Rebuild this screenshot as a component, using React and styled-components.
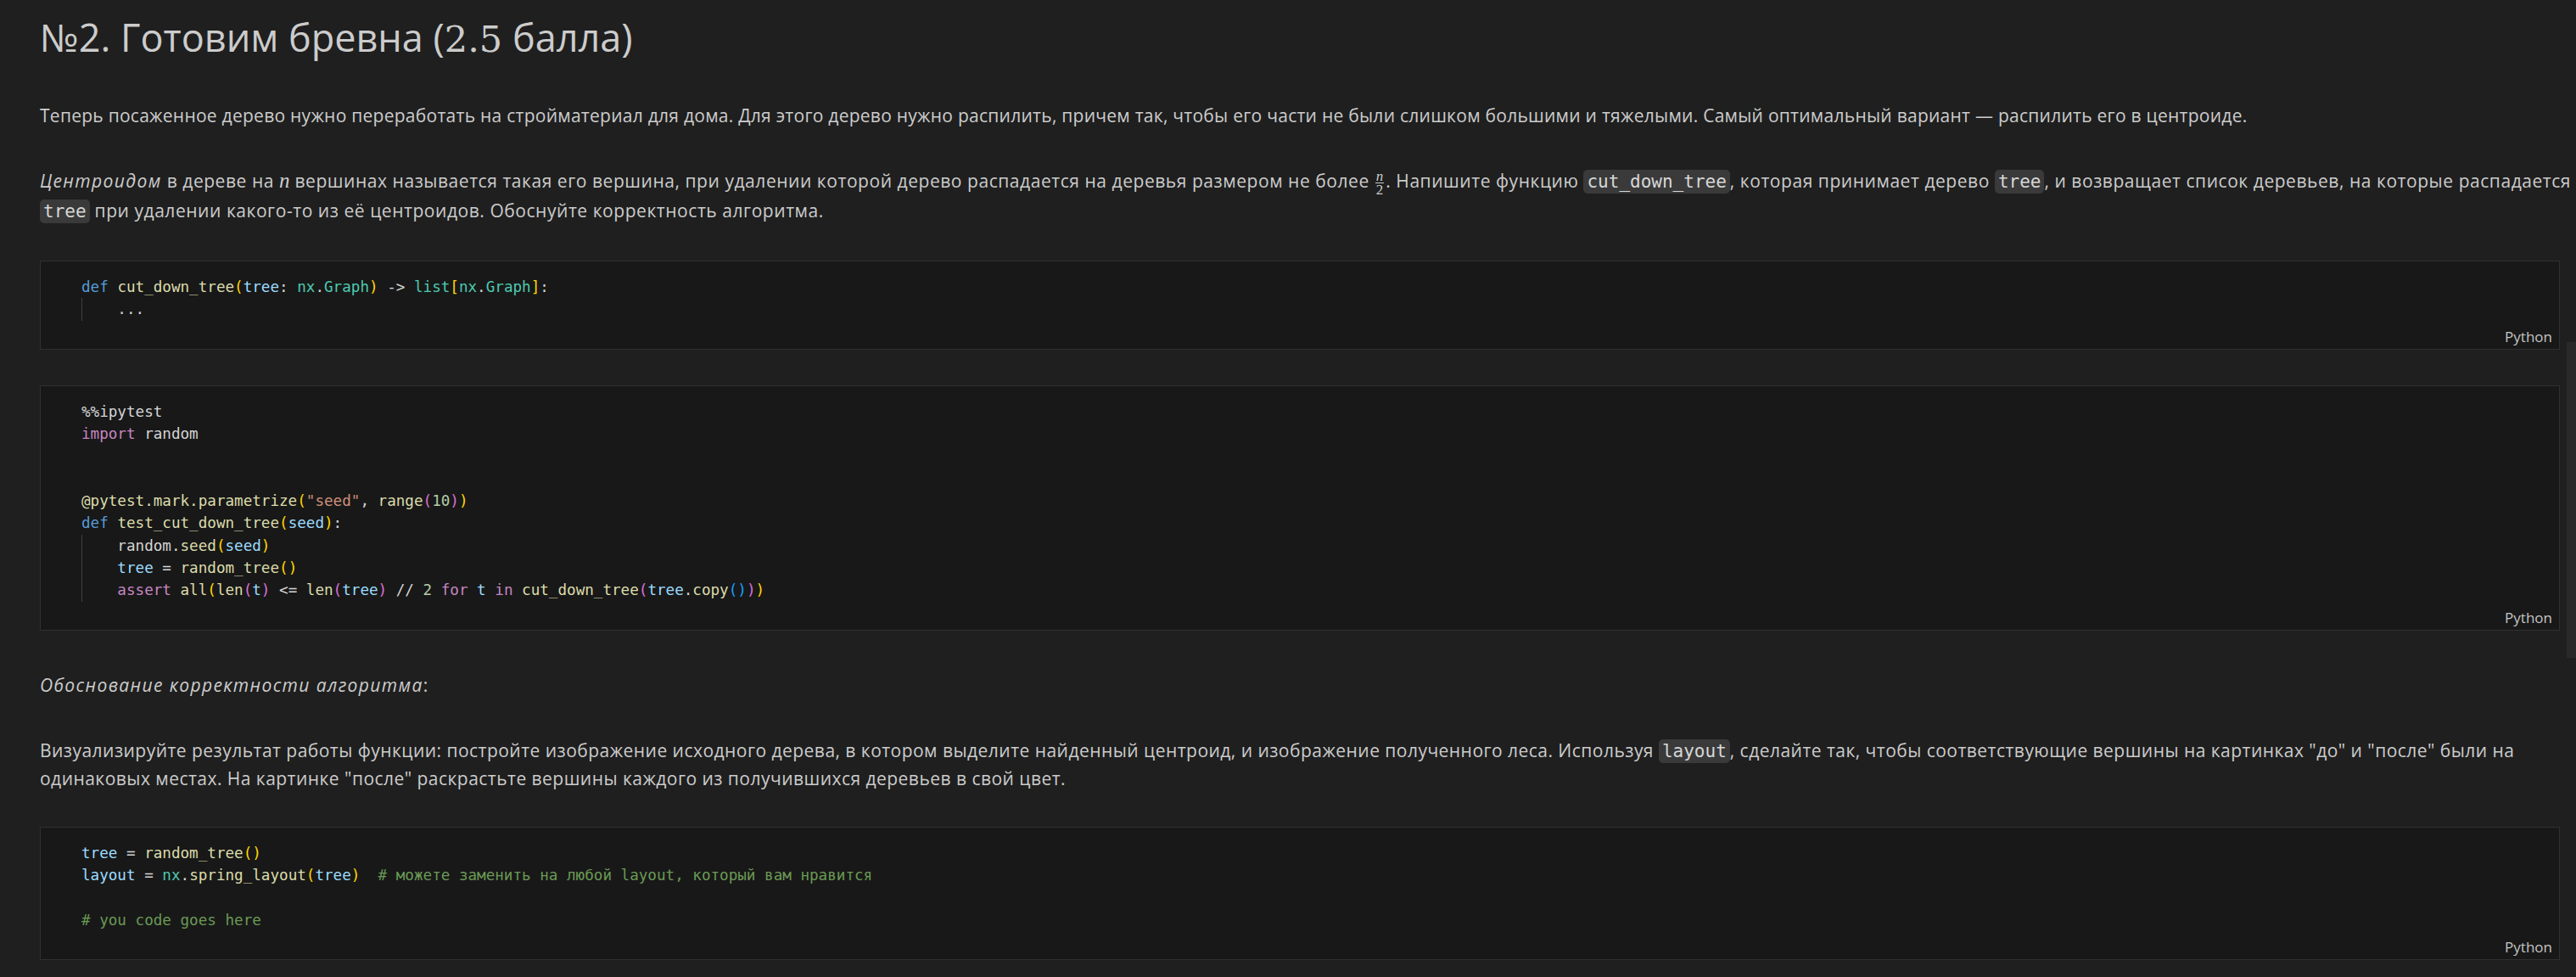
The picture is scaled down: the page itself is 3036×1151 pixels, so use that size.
import React from "react";
import styled, { createGlobalStyle } from "styled-components";

const GlobalStyle = createGlobalStyle`
  html, body {
    margin: 0;
    padding: 0;
    background: #1f1f1f;
  }
  body {
    color: #cccccc;
    font-family: "Open Sans", "Noto Sans", sans-serif;
  }
`;

const palette = {
  kw: "#569cd6",
  ctl: "#c586c0",
  fn: "#dcdcaa",
  var: "#9cdcfe",
  cls: "#4ec9b0",
  str: "#ce9178",
  num: "#b5cea8",
  com: "#6a9955",
  op: "#d4d4d4",
  b1: "#ffd700",
  b2: "#da70d6",
  b3: "#179fff",
};

const Page = styled.div`
  position: relative;
  box-sizing: border-box;
  min-height: 1151px;
  padding: 16px 8px 0 47px;
  overflow: hidden;
`;

const Title = styled.h1`
  margin: 0;
  font-size: 45px;
  font-weight: 400;
  line-height: 56px;
  color: #cccccc;
  white-space: nowrap;
`;

const TitleMath = styled.span`
  font-family: "DejaVu Serif", "Liberation Serif", serif;
  font-size: 43px;
`;

const Para = styled.div`
  margin-top: ${(p) => p.$gap}px;
  font-size: 21px;
  letter-spacing: ${(p) => p.$ls || 0}px;
  color: #cccccc;
  white-space: nowrap;
`;

const Line = styled.div`
  line-height: ${(p) => p.$h || 33}px;
`;

const Em = styled.em`
  font-style: italic;
  letter-spacing: 1.4px;
`;

const MathVar = styled.span`
  font-family: "Liberation Serif", "DejaVu Serif", serif;
  font-style: italic;
  font-size: 25px;
  letter-spacing: 0;
`;

const Frac = styled.span`
  display: inline-flex;
  flex-direction: column;
  align-items: center;
  vertical-align: middle;
  margin: 0 2px 0 1px;
  font-family: "Liberation Serif", "DejaVu Serif", serif;
  font-size: 17px;
  line-height: 15px;
  letter-spacing: 0;
`;

const FracTop = styled.span`
  font-style: italic;
  padding: 0 1px;
  border-bottom: 1px solid #cccccc;
`;

const InlineCode = styled.code`
  font-family: "DejaVu Sans Mono", "Liberation Mono", monospace;
  font-size: 21px;
  line-height: 1;
  letter-spacing: 0;
  color: #d7d7d7;
  background: #3a3a3a;
  padding: 2px 4px;
  border-radius: 5px;
`;

const CodeCell = styled.div`
  margin-top: ${(p) => p.$gap}px;
  margin-right: 11px;
  border: 1px solid #303030;
  background: #181818;
`;

const CodeBody = styled.div`
  padding: 17px 0 0 48px;
  font-family: "DejaVu Sans Mono", "Liberation Mono", monospace;
  font-size: 17.6px;
  line-height: 26.33px;
  color: ${palette.op};
`;

const CodeLine = styled.div`
  height: 26.33px;
  white-space: pre;
`;

const Indent = styled.span`
  display: inline-block;
  box-sizing: border-box;
  width: 4ch;
  height: 26.33px;
  vertical-align: top;
  border-left: 1px solid #404040;
`;

const Tok = styled.span`
  color: ${(p) => palette[p.$c] || palette.op};
`;

const CellFooter = styled.div`
  box-sizing: border-box;
  height: 33px;
  display: flex;
  justify-content: flex-end;
  align-items: flex-end;
  padding: 0 8px 4px 0;
  font-size: 17px;
  line-height: 20px;
  color: #c4c4c4;
`;

const ScrollThumb = styled.div`
  position: absolute;
  right: 0;
  top: 403px;
  width: 11px;
  height: 372px;
  background: #292929;
`;

const cell1 = [
  {
    toks: [
      ["def", "kw"], [" "], ["cut_down_tree", "fn"], ["(", "b1"], ["tree", "var"],
      [": "], ["nx", "cls"], ["."], ["Graph", "cls"], [")", "b1"], [" -> "],
      ["list", "cls"], ["[", "b1"], ["nx", "cls"], ["."], ["Graph", "cls"], ["]", "b1"], [":"],
    ],
  },
  { indent: true, toks: [["..."]] },
];

const cell2 = [
  { toks: [["%%ipytest"]] },
  { toks: [["import", "ctl"], [" random"]] },
  { toks: [] },
  { toks: [] },
  {
    toks: [
      ["@pytest.mark.parametrize", "fn"], ["(", "b1"], ["\"seed\"", "str"], [", "],
      ["range", "fn"], ["(", "b2"], ["10", "num"], [")", "b2"], [")", "b1"],
    ],
  },
  {
    toks: [
      ["def", "kw"], [" "], ["test_cut_down_tree", "fn"], ["(", "b1"], ["seed", "var"],
      [")", "b1"], [":"],
    ],
  },
  {
    indent: true,
    toks: [["random."], ["seed", "fn"], ["(", "b1"], ["seed", "var"], [")", "b1"]],
  },
  {
    indent: true,
    toks: [["tree", "var"], [" = "], ["random_tree", "fn"], ["()", "b1"]],
  },
  {
    indent: true,
    toks: [
      ["assert", "ctl"], [" "], ["all", "fn"], ["(", "b1"], ["len", "fn"], ["(", "b2"],
      ["t", "var"], [")", "b2"], [" <= "], ["len", "fn"], ["(", "b2"], ["tree", "var"],
      [")", "b2"], [" // "], ["2", "num"], [" "], ["for", "ctl"], [" "], ["t", "var"],
      [" "], ["in", "ctl"], [" "], ["cut_down_tree", "fn"], ["(", "b2"], ["tree", "var"],
      ["."], ["copy", "fn"], ["()", "b3"], [")", "b2"], [")", "b1"],
    ],
  },
];

const cell3 = [
  { toks: [["tree", "var"], [" = "], ["random_tree", "fn"], ["()", "b1"]] },
  {
    toks: [
      ["layout", "var"], [" = "], ["nx", "cls"], ["."], ["spring_layout", "fn"],
      ["(", "b1"], ["tree", "var"], [")", "b1"], ["  "],
      ["# можете заменить на любой layout, который вам нравится", "com"],
    ],
  },
  { toks: [] },
  { toks: [["# you code goes here", "com"]] },
];

function Cell({ gap, lines }) {
  return (
    <CodeCell $gap={gap}>
      <CodeBody>
        {lines.map((line, i) => (
          <CodeLine key={i}>
            {line.indent && <Indent />}
            {line.toks.map(([text, c], j) => (
              <Tok key={j} $c={c}>
                {text}
              </Tok>
            ))}
          </CodeLine>
        ))}
      </CodeBody>
      <CellFooter>Python</CellFooter>
    </CodeCell>
  );
}

export default function App() {
  return (
    <>
      <GlobalStyle />
      <Page>
        <Title>
          №2. Готовим бревна (<TitleMath>2.5</TitleMath> балла)
        </Title>

        <Para $gap={46} $ls={0.26}>
          <Line>
            Теперь посаженное дерево нужно переработать на стройматериал для дома. Для этого
            дерево нужно распилить, причем так, чтобы его части не были слишком большими и
            тяжелыми. Самый оптимальный вариант — распилить его в центроиде.
          </Line>
        </Para>

        <Para $gap={41} $ls={0.55}>
          <Line $h={37}>
            <Em>Центроидом</Em> в дереве на <MathVar>n</MathVar> вершинах называется такая его
            вершина, при удалении которой дерево распадается на деревья размером не более{" "}
            <Frac>
              <FracTop>n</FracTop>
              <span>2</span>
            </Frac>
            . Напишите функцию <InlineCode>cut_down_tree</InlineCode>, которая принимает дерево{" "}
            <InlineCode>tree</InlineCode>, и возвращает список деревьев, на которые распадается
          </Line>
          <Line>
            <InlineCode>tree</InlineCode> при удалении какого-то из её центроидов. Обоснуйте
            корректность алгоритма.
          </Line>
        </Para>

        <Cell gap={42} lines={cell1} />
        <Cell gap={42} lines={cell2} />

        <Para $gap={48} $ls={0.55}>
          <Line>
            <Em>Обоснование корректности алгоритма</Em>:
          </Line>
        </Para>

        <Para $gap={44} $ls={0.47}>
          <Line>
            Визуализируйте результат работы функции: постройте изображение исходного дерева, в
            котором выделите найденный центроид, и изображение полученного леса. Используя{" "}
            <InlineCode>layout</InlineCode>, сделайте так, чтобы соответствующие вершины на
            картинках "до" и "после" были на
          </Line>
          <Line>
            одинаковых местах. На картинке "после" раскрастьте вершины каждого из получившихся
            деревьев в свой цвет.
          </Line>
        </Para>

        <Cell gap={40} lines={cell3} />

        <ScrollThumb />
      </Page>
    </>
  );
}
